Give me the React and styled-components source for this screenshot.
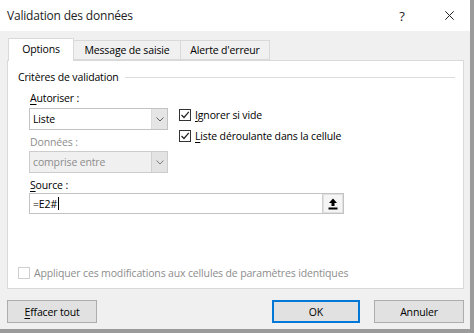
import React from "react";
import styled, { createGlobalStyle } from "styled-components";

const Global = createGlobalStyle`
  html, body { margin: 0; padding: 0; background: #9b9b9b; }
  body { font-family: "Open Sans", "Noto Sans", sans-serif; font-size: 10.5px; letter-spacing: -0.15px; color: #000; }
  * { box-sizing: border-box; }
`;

const Dialog = styled.div`
  width: 470px;
  height: 329px;
  background: #f0f0f0;
  display: flex;
  flex-direction: column;
`;

const TitleBar = styled.div`
  height: 31px;
  background: #fff;
  display: flex;
  align-items: center;
  padding: 0 6px 0 7px;
  color: #222;
`;

const Title = styled.div`
  flex: 1;
  margin-top: -1px;
  font-size: 12px;
  letter-spacing: -0.2px;
`;

const TitleBtn = styled.div`
  width: ${p => p.$w}px;
  margin-left: ${p => p.$ml || 0}px;
  display: flex;
  justify-content: center;
  align-items: center;
  font-size: 13px;
  color: #222;
`;

const Body = styled.div`
  flex: 1;
  display: flex;
  flex-direction: column;
  padding: 7px 6px 0 7px;
`;

const TabStrip = styled.div`
  display: flex;
  align-items: flex-end;
  height: 22px;
  padding-left: 1px;
  position: relative;
  z-index: 1;
`;

const Tab = styled.div`
  height: ${p => (p.$active ? 23 : 20)}px;
  width: ${p => p.$w}px;
  margin-bottom: ${p => (p.$active ? -1 : 0)}px;
  background: ${p => (p.$active ? "#fff" : "#f0f0f0")};
  border: 1px solid #d9d9d9;
  border-bottom: ${p => (p.$active ? "none" : "1px solid #d9d9d9")};
  border-left: ${p => (p.$first || p.$active ? "1px solid #d9d9d9" : "none")};
  display: flex;
  align-items: center;
  justify-content: center;
  padding-bottom: ${p => (p.$active ? 2 : 0)}px;
`;

const Panel = styled.div`
  height: 229px;
  background: #fff;
  border: 1px solid #d9d9d9;
  display: flex;
  flex-direction: column;
  padding: 8px 8px 7px 10px;
`;

const Legend = styled.div`
  display: flex;
  align-items: center;
  height: 16px;
  gap: 6px;
  &::after {
    content: "";
    flex: 1;
    height: 1px;
    background: #dcdcdc;
  }
`;

const Criteria = styled.div`
  padding-left: 11px;
  display: flex;
  flex-direction: column;
`;

const TopRow = styled.div`
  display: flex;
  gap: 11px;
`;

const Column = styled.div`
  display: flex;
  flex-direction: column;
  width: ${p => (p.$w ? p.$w + "px" : "auto")};
  padding-top: ${p => p.$pt || 0}px;
  gap: ${p => p.$gap || 0}px;
`;

const Label = styled.div`
  height: 16px;
  line-height: 16px;
  margin-top: ${p => p.$mt || 0}px;
  margin-bottom: ${p => p.$mb || 0}px;
  color: ${p => (p.$disabled ? "#8d8d8d" : "#000")};
  padding-left: 1px;
  u { text-decoration-thickness: 1px; text-underline-offset: 2px; }
`;

const Select = styled.div`
  height: 22px;
  display: flex;
  border: 1px solid ${p => (p.$disabled ? "#cccccc" : "#c3c3c3")};
  background: ${p => (p.$disabled ? "#f0f0f0" : "#fff")};
  color: ${p => (p.$disabled ? "#8d8d8d" : "#000")};
`;

const SelectText = styled.div`
  flex: 1;
  display: flex;
  align-items: center;
  padding-left: 3px;
`;

const SelectBtn = styled.div`
  width: 16px;
  background: ${p => (p.$disabled ? "#e3e3e3" : "#e5e5e5")};
  border-left: 1px solid ${p => (p.$disabled ? "#d0d0d0" : "#dadada")};
  display: flex;
  align-items: center;
  justify-content: center;
`;

const CheckRow = styled.div`
  display: flex;
  align-items: center;
  height: 16px;
  gap: 4px;
  color: ${p => (p.$disabled ? "#8d8d8d" : "#000")};
  u { text-decoration-thickness: 1px; text-underline-offset: 2px; }
`;

const Box = styled.div`
  width: 12px;
  height: 12px;
  border: 1px solid ${p => (p.$disabled ? "#cfcfcf" : "#333")};
  background: #fff;
  display: flex;
  align-items: center;
  justify-content: center;
`;

const SourceInput = styled.div`
  width: 315px;
  height: 21px;
  border: 1px solid #c3c3c3;
  display: flex;
  background: #fff;
`;

const InputText = styled.div`
  flex: 1;
  display: flex;
  align-items: center;
  padding-left: 3px;
`;

const Caret = styled.span`
  width: 1px;
  height: 13px;
  background: #000;
  margin-left: 1px;
`;

const RefBtn = styled.div`
  width: 21px;
  background: #f5f5f5;
  border-left: 1px solid #cfcfcf;
  box-shadow: inset 0 0 0 1px #e0e0e0;
  display: flex;
  align-items: center;
  justify-content: center;
`;

const Apply = styled.div`
  margin-top: auto;
`;

const Footer = styled.div`
  display: flex;
  margin-top: 11px;
`;

const Button = styled.div`
  width: ${p => p.$w}px;
  height: 23px;
  margin-left: ${p => p.$ml || 0}px;
  background: #e1e1e1;
  border: ${p => (p.$default ? "2px solid #0078d7" : "1px solid #adadad")};
  display: flex;
  align-items: center;
  justify-content: center;
  u { text-decoration-thickness: 1px; text-underline-offset: 2px; }
`;

const Chevron = ({ color = "#606060" }) => (
  <svg width="8" height="5" viewBox="0 0 8 5">
    <path d="M0.5 0.5 L4 4 L7.5 0.5" fill="none" stroke={color} strokeWidth="1" />
  </svg>
);

const Check = () => (
  <svg width="10" height="10" viewBox="0 0 10 10">
    <path d="M1.5 5 L4 7.5 L8.8 1.8" fill="none" stroke="#222" strokeWidth="1.2" />
  </svg>
);

const UploadIcon = () => (
  <svg width="10" height="12" viewBox="0 0 10 12">
    <path d="M5 0.5 L9 5 L6.5 5 L6.5 8 L3.5 8 L3.5 5 L1 5 Z" fill="#000" />
    <rect x="0.5" y="9.5" width="9" height="2" fill="#000" />
  </svg>
);

const CloseIcon = () => (
  <svg width="9" height="9" viewBox="0 0 9 9">
    <path d="M0.3 0.3 L8.7 8.7 M8.7 0.3 L0.3 8.7" stroke="#222" strokeWidth="1" />
  </svg>
);

export default function App() {
  return (
    <>
      <Global />
      <Dialog>
        <TitleBar>
          <Title>Validation des données</Title>
          <TitleBtn $w={14}>?</TitleBtn>
          <TitleBtn $w={30} $ml={25}>
            <CloseIcon />
          </TitleBtn>
        </TitleBar>
        <Body>
          <TabStrip>
            <Tab $active $first $w={66}>Options</Tab>
            <Tab $w={107}>Message de saisie</Tab>
            <Tab $w={89}>Alerte d'erreur</Tab>
          </TabStrip>
          <Panel>
            <Legend>Critères de validation</Legend>
            <Criteria>
              <TopRow>
                <Column $w={139}>
                  <Label $mt={5} $mb={2}>
                    <u>A</u>utoriser :
                  </Label>
                  <Select>
                    <SelectText>Liste</SelectText>
                    <SelectBtn>
                      <Chevron />
                    </SelectBtn>
                  </Select>
                  <Label $disabled $mt={4} $mb={1}>
                    Données :
                  </Label>
                  <Select $disabled>
                    <SelectText>comprise entre</SelectText>
                    <SelectBtn $disabled>
                      <Chevron color="#7a7a7a" />
                    </SelectBtn>
                  </Select>
                </Column>
                <Column $pt={22} $gap={5}>
                  <CheckRow>
                    <Box>
                      <Check />
                    </Box>
                    <span>
                      <u>I</u>gnorer si vide
                    </span>
                  </CheckRow>
                  <CheckRow>
                    <Box>
                      <Check />
                    </Box>
                    <span>
                      <u>L</u>iste déroulante dans la cellule
                    </span>
                  </CheckRow>
                </Column>
              </TopRow>
              <Label $mt={4}>
                <u>S</u>ource :
              </Label>
              <SourceInput>
                <InputText>
                  =E2#<Caret />
                </InputText>
                <RefBtn>
                  <UploadIcon />
                </RefBtn>
              </SourceInput>
            </Criteria>
            <Apply>
              <CheckRow $disabled>
                <Box $disabled />
                <span>Appliquer ces modifications aux cellules de paramètres identiques</span>
              </CheckRow>
            </Apply>
          </Panel>
          <Footer>
            <Button $w={90}>
              <span>
                <u>E</u>ffacer tout
              </span>
            </Button>
            <Button $w={88} $ml={175} $default>
              OK
            </Button>
            <Button $w={90} $ml={14}>
              Annuler
            </Button>
          </Footer>
        </Body>
      </Dialog>
    </>
  );
}
